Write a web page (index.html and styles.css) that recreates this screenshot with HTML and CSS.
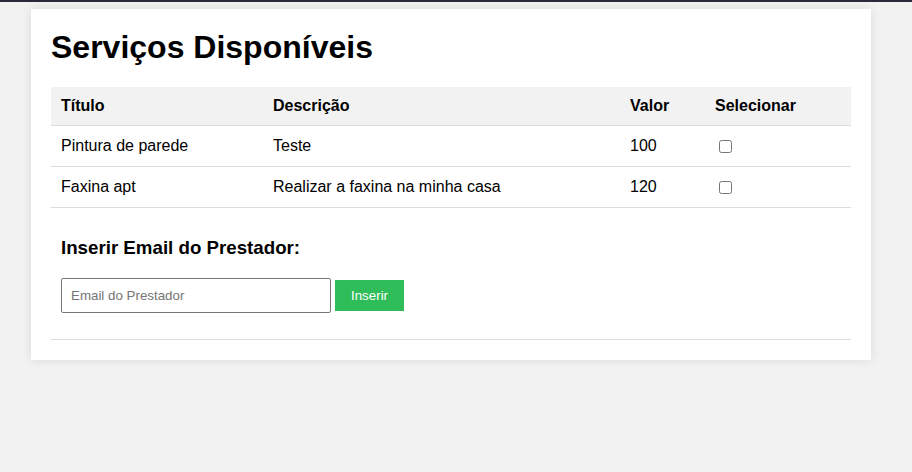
FILE: index.html
```html
<!DOCTYPE html>
<html lang="pt">
<head>
<meta charset="utf-8">
<title>Serviços Disponíveis</title>
<link rel="stylesheet" href="styles.css">
</head>
<body>
<div class="topbar"></div>
<div class="card">
  <h1 class="title">Serviços Disponíveis</h1>
  <table class="services">
    <thead>
      <tr>
        <th class="c-title">Título</th>
        <th class="c-desc">Descrição</th>
        <th class="c-val">Valor</th>
        <th class="c-sel">Selecionar</th>
      </tr>
    </thead>
    <tbody>
      <tr>
        <td>Pintura de parede</td>
        <td>Teste</td>
        <td>100</td>
        <td><input type="checkbox" class="check"></td>
      </tr>
      <tr>
        <td>Faxina apt</td>
        <td>Realizar a faxina na minha casa</td>
        <td>120</td>
        <td><input type="checkbox" class="check"></td>
      </tr>
    </tbody>
  </table>
  <div class="email-section">
    <h3 class="email-title">Inserir Email do Prestador:</h3>
    <form class="email-form">
      <input type="email" class="email-input" placeholder="Email do Prestador">
      <button type="button" class="email-btn">Inserir</button>
    </form>
  </div>
</div>
</body>
</html>
```
FILE: styles.css
```css
html, body {
  margin: 0;
  padding: 0;
}
body {
  background: #f2f2f2;
  font-family: "Liberation Sans", Arial, sans-serif;
  color: #000;
  height: 472px;
}
.topbar {
  height: 2px;
  background: #2c2a3a;
}
.card {
  width: 800px;
  margin: 7px 0 0 31px;
  padding: 20px;
  background: #fff;
  box-shadow: 0 0 10px rgba(0, 0, 0, 0.1);
}
.title {
  margin: 0 0 21px 0;
  font-size: 32px;
  font-weight: bold;
  line-height: 37px;
}
.services {
  width: 100%;
  border-collapse: collapse;
  font-size: 16px;
}
.services th,
.services td {
  padding: 10px;
  text-align: left;
  border-bottom: 1px solid #ddd;
  line-height: 18px;
}
.services td {
  height: 20px;
}
.services th {
  background: #f2f2f2;
  font-weight: bold;
}
.c-title { width: 192px; }
.c-desc { width: 337px; }
.c-val { width: 65px; }
.check {
  margin: 3px 3px 3px 4px;
  width: 13px;
  height: 13px;
  vertical-align: -1px;
}
.email-section {
  padding: 10px;
  border-bottom: 1px solid #ddd;
}
.email-title {
  margin: 19px 0 19px 0;
  font-size: 18.72px;
  line-height: 22px;
  font-weight: bold;
}
.email-form {
  margin: 0 0 16px 0;
  display: flex;
  align-items: center;
  gap: 4px;
}
.email-input {
  box-sizing: border-box;
  width: 270px;
  height: 35px;
  padding: 8px 9px;
  border: 1px solid #767676;
  border-radius: 2px;
  font-family: "Liberation Sans", Arial, sans-serif;
  font-size: 13.33px;
  color: #000;
  background: #fff;
}
.email-input::placeholder {
  color: #757575;
}
.email-btn {
  box-sizing: border-box;
  height: 31px;
  width: 69px;
  padding: 8px 16px;
  border: none;
  background: #2ebd59;
  color: #fff;
  font-family: "Liberation Sans", Arial, sans-serif;
  font-size: 13.33px;
  cursor: pointer;
}
```
